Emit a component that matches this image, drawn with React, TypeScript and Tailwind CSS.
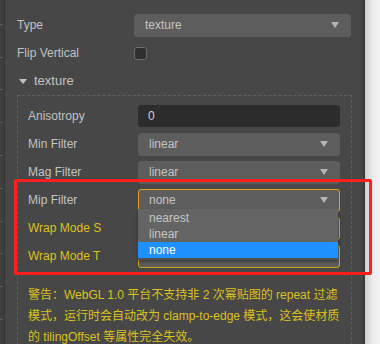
import React from "react"

const font = { fontFamily: '"Liberation Sans", Arial, "Noto Sans CJK SC", sans-serif' }

function Arrow() {
  return (
    <svg width="8" height="6" viewBox="0 0 8 6" className="shrink-0">
      <path d="M0 0 L8 0 L4 6 Z" fill="#b4b4b4" />
    </svg>
  )
}

function Select({ value, border }: { value: string; border?: string }) {
  return (
    <div
      className={`flex h-[23px] flex-1 items-center justify-between rounded-[3px] bg-[#5d5d5d] pl-[10px] pr-[11px] text-[#c4c4c4] ${
        border ? border : "border border-[#5d5d5d]"
      }`}
    >
      <span>{value}</span>
      <Arrow />
    </div>
  )
}

function Row({ label, children, yellow }: { label: string; children: React.ReactNode; yellow?: boolean }) {
  return (
    <div className="flex h-[28px] items-center">
      <div className={`w-[110px] shrink-0 ${yellow ? "text-[#dcc21c]" : "text-[#c2c2c2]"}`}>{label}</div>
      {children}
    </div>
  )
}

export default function App() {
  return (
    <div className="relative flex h-[344px] w-[380px] overflow-hidden bg-[#474747] text-[12px]" style={font}>
      {/* ruler strip on the left */}
      <div className="flex w-[5px] shrink-0 flex-col justify-around border-r border-[#343434] bg-[#3e3e3e] py-2">
        {Array.from({ length: 10 }).map((_, i) => (
          <div key={i} className="h-px w-[3px] bg-[#5a5a5a]" />
        ))}
      </div>

      {/* inspector panel */}
      <div className="flex w-[360px] shrink-0 flex-col border-r-2 border-[#3a3a3a]">
        <div className="mt-[2px] h-px bg-[#363636]" />
        <div className="flex flex-col pl-[12px] pr-[12px] pt-[9px]">
          <div className="flex h-[28px] items-center">
            <div className="w-[117px] shrink-0 text-[#c2c2c2]">Type</div>
            <Select value="texture" />
          </div>
          <div className="flex h-[28px] items-center">
            <div className="w-[117px] shrink-0 text-[#c2c2c2]">Flip Vertical</div>
            <div className="h-[13px] w-[13px] rounded-[3px] border border-[#6c6c6c] bg-[#2f2f2f]" />
          </div>
          <div className="flex h-[28px] items-center gap-[7px] pl-[2px] text-[#c2c2c2]">
            <svg width="8" height="5" viewBox="0 0 8 5">
              <path d="M0 0 L8 0 L4 5 Z" fill="#c2c2c2" />
            </svg>
            <span className="text-[13px]">texture</span>
          </div>

          {/* dashed group box */}
          <div className="-mr-px flex h-[260px] flex-col border border-b-0 border-dashed border-[#5e5e5e] pl-[10px] pr-[11px] pt-[6px]">
            <Row label="Anisotropy">
              <div className="flex h-[22px] flex-1 items-center rounded-[3px] bg-[#2c2c2c] pl-[10px] text-[#d0d0d0]">0</div>
            </Row>
            <Row label="Min Filter">
              <Select value="linear" />
            </Row>
            <Row label="Mag Filter">
              <Select value="linear" />
            </Row>
            <Row label="Mip Filter">
              <Select value="none" border="border border-[#e0a020]" />
            </Row>
            <Row label="Wrap Mode S" yellow>
              <Select value="" border="border border-[#c9a818]" />
            </Row>
            <Row label="Wrap Mode T" yellow>
              <Select value="" border="border border-[#c9a818]" />
            </Row>
            <p className="mt-[15px] w-[314px] text-[12px] leading-[21px] text-[#dcc21c]">
              警告：WebGL 1.0 平台不支持非 2 次幂贴图的 repeat 过滤模式，运行时会自动改为 clamp-to-edge 模式，这会使材质的 tilingOffset 等属性完全失效。
            </p>
          </div>
        </div>
      </div>

      {/* light area on the right */}
      <div className="flex-1 bg-gradient-to-r from-[#cfcfcf] via-[#ececec] to-[#f4f4f4]" />

      {/* open dropdown list */}
      <div className="absolute left-[138px] top-[209px] w-[200px] border-b-2 border-[#505050] bg-[#646464] pt-px shadow-[0_2px_3px_rgba(0,0,0,0.35)]">
        <div className="h-[16px] pl-[11px] text-[12px] leading-[16px] text-[#c4c4c4]">nearest</div>
        <div className="h-[16px] pl-[11px] text-[12px] leading-[16px] text-[#c4c4c4]">linear</div>
        <div className="h-[16px] bg-[#1e90ff] pl-[11px] text-[12px] leading-[16px] text-white">none</div>
      </div>

      {/* red annotation box */}
      <div className="absolute left-[14px] top-[179px] h-[96px] w-[358px] rounded-[2px] border-[3px] border-[#ff1f1f]" />
    </div>
  )
}
